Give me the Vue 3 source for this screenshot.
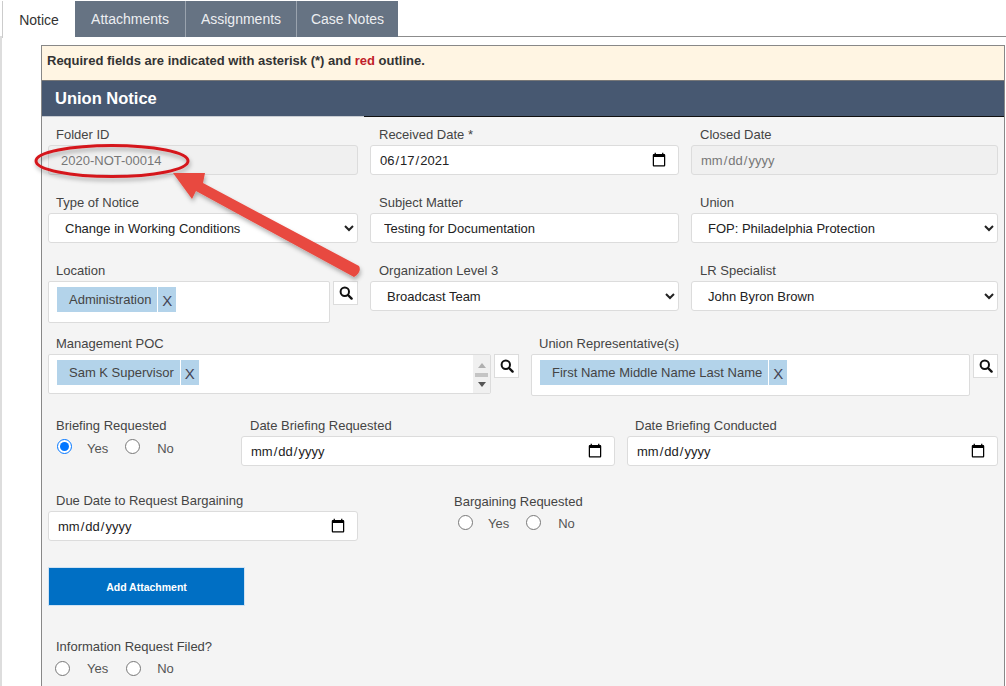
<template>
  <div class="page">
    <div class="tabs">
      <button v-for="(tab, i) in tabs" :key="tab" type="button" class="tab" :class="{ active: i === 0 }">{{ tab }}</button>
    </div>

    <div class="panel">
      <div class="notice-bar">Required fields are indicated with asterisk (*) and <span class="red">red</span> outline.</div>
      <div class="panel-title">Union Notice</div>

      <form class="form" @submit.prevent>
        <div class="row row-three row-first">
          <div class="field">
            <label>Folder ID</label>
            <input class="control readonly id-input" type="text" value="2020-NOT-00014" disabled />
          </div>
          <div class="field">
            <label>Received Date *</label>
            <input class="control" type="date" value="2021-06-17" />
          </div>
          <div class="field">
            <label>Closed Date</label>
            <input class="control readonly" type="date" disabled />
          </div>
        </div>

        <div class="row row-three row-second">
          <div class="field">
            <label>Type of Notice</label>
            <select class="control pick"><option>Change in Working Conditions</option></select>
          </div>
          <div class="field">
            <label>Subject Matter</label>
            <input class="control text-input" type="text" value="Testing for Documentation" />
          </div>
          <div class="field">
            <label>Union</label>
            <select class="control pick"><option>FOP: Philadelphia Protection</option></select>
          </div>
        </div>

        <div class="row row-three row-third">
          <div class="field">
            <label>Location</label>
            <div class="lookup">
              <div class="tag-box loc-box">
                <span class="tag">Administration</span><span class="tag-x">X</span>
              </div>
              <button type="button" class="search-btn">
                <svg width="14" height="14" viewBox="0 0 14 14"><circle cx="5.8" cy="5.8" r="4.2" fill="none" stroke="#111" stroke-width="2" /><path d="M9 9l3.6 3.6" stroke="#111" stroke-width="2.4" stroke-linecap="round" /></svg>
              </button>
            </div>
          </div>
          <div class="field">
            <label>Organization Level 3</label>
            <select class="control pick"><option>Broadcast Team</option></select>
          </div>
          <div class="field">
            <label>LR Specialist</label>
            <select class="control pick"><option>John Byron Brown</option></select>
          </div>
        </div>

        <div class="row row-two row-fourth">
          <div class="field">
            <label>Management POC</label>
            <div class="lookup">
              <div class="tag-box poc-box">
                <span class="tag">Sam K Supervisor</span><span class="tag-x">X</span>
                <div class="fake-scroll">
                  <i class="up"></i>
                  <b></b>
                  <i class="down"></i>
                </div>
              </div>
              <button type="button" class="search-btn">
                <svg width="14" height="14" viewBox="0 0 14 14"><circle cx="5.8" cy="5.8" r="4.2" fill="none" stroke="#111" stroke-width="2" /><path d="M9 9l3.6 3.6" stroke="#111" stroke-width="2.4" stroke-linecap="round" /></svg>
              </button>
            </div>
          </div>
          <div class="field">
            <label>Union Representative(s)</label>
            <div class="lookup">
              <div class="tag-box rep-box">
                <span class="tag">First Name Middle Name Last Name</span><span class="tag-x">X</span>
              </div>
              <button type="button" class="search-btn">
                <svg width="14" height="14" viewBox="0 0 14 14"><circle cx="5.8" cy="5.8" r="4.2" fill="none" stroke="#111" stroke-width="2" /><path d="M9 9l3.6 3.6" stroke="#111" stroke-width="2.4" stroke-linecap="round" /></svg>
              </button>
            </div>
          </div>
        </div>

        <div class="row row-brief">
          <div class="field">
            <label>Briefing Requested</label>
            <div class="radios">
              <input type="radio" name="brief" checked /><span>Yes</span>
              <input type="radio" name="brief" /><span>No</span>
            </div>
          </div>
          <div class="field">
            <label>Date Briefing Requested</label>
            <input class="control" type="date" />
          </div>
          <div class="field">
            <label>Date Briefing Conducted</label>
            <input class="control" type="date" />
          </div>
        </div>

        <div class="row row-due">
          <div class="field">
            <label>Due Date to Request Bargaining</label>
            <input class="control" type="date" />
          </div>
          <div class="field bargain">
            <label>Bargaining Requested</label>
            <div class="radios">
              <input type="radio" name="bargain" /><span>Yes</span>
              <input type="radio" name="bargain" /><span>No</span>
            </div>
          </div>
        </div>

        <button type="button" class="attach-btn">Add Attachment</button>

        <div class="field info">
          <label>Information Request Filed?</label>
          <div class="radios">
            <input type="radio" name="info" /><span>Yes</span>
            <input type="radio" name="info" /><span>No</span>
          </div>
        </div>
      </form>
    </div>

    <!-- callout drawn on top of the screenshot -->
    <svg class="callout" width="1006" height="686" viewBox="0 0 1006 686">
      <defs>
        <filter id="soft" x="-20%" y="-40%" width="140%" height="180%">
          <feDropShadow dx="1" dy="3" stdDeviation="2" flood-color="#000" flood-opacity="0.3" />
        </filter>
      </defs>
      <ellipse cx="112" cy="161" rx="76" ry="15.5" fill="none" stroke="#d5191d" stroke-width="3" filter="url(#soft)" />
      <path
        d="M173 173 L205 173 L203 183 L359 266 Q362 272 354 277 L196 191 L192 199 Z"
        fill="#e8483f"
        filter="url(#soft)"
      />
    </svg>
  </div>
</template>

<script setup>
const tabs = ['Notice', 'Attachments', 'Assignments', 'Case Notes']
</script>

<style>
html,
body {
  margin: 0;
  background: #fff;
  overflow: hidden;
}
</style>

<style scoped>
.page {
  position: relative;
  width: 1006px;
  height: 686px;
  overflow: hidden;
  background: #fff;
  font-family: "Liberation Sans", Arial, sans-serif;
  font-size: 13px;
  color: #444;
}

.tabs {
  display: flex;
  height: 35px;
  padding: 1px 0 0 2px;
  border-bottom: 1px solid #8c8c8c;
}

.tab {
  width: 111px;
  height: 36px;
  border: none;
  border-right: 1px solid #9aa3ae;
  padding: 0;
  background: #667383;
  color: #eceef1;
  font: 14px "Liberation Sans", Arial, sans-serif;
}

.tab:last-child {
  width: 101px;
  border-right: none;
}

.tab.active {
  width: 73px;
  height: 37px;
  background: #fff;
  color: #333;
  border-left: 1px solid #ccc;
  border-right: none;
}

.panel {
  margin: 8px 1px 0 41px;
  border: 1px solid #888;
  border-bottom: none;
  height: 642px;
  background: #f4f4f4;
}

.notice-bar {
  height: 34px;
  line-height: 30px;
  padding-left: 5px;
  background: #fff5e3;
  border-bottom: 1px solid #777;
  color: #333;
  font-weight: 700;
  font-size: 13px;
}

.red {
  color: #c0202a;
}

.panel-title {
  height: 35px;
  line-height: 34px;
  padding-left: 13px;
  background: #475871;
  border-bottom: 1px solid #222;
  border-image: linear-gradient(to right, #c8ccd2 322px, #111 322px) 1;
  color: #fff;
  font-size: 16.5px;
  font-weight: 700;
}

.form {
  padding: 7px 6px 0;
}

.row {
  display: grid;
  column-gap: 12px;
  width: 950px;
}

.row-three {
  grid-template-columns: 310px 309px 307px;
}

.row-three .field + .field label {
  padding-left: 9px;
}

.row-first,
.row-second {
  margin-bottom: 17px;
}

.row-third {
  height: 63px;
  margin-bottom: 10px;
}

.row-two {
  grid-template-columns: 471px 467px;
  height: 63px;
  margin-bottom: 19px;
}

.row-brief {
  grid-template-columns: 181px 374px 371px;
  margin-bottom: 24px;
}

.row-brief .field:nth-child(2) label {
  padding-left: 9px;
}

.row-due {
  grid-template-columns: 310px 300px;
  column-gap: 96px;
}

.field label {
  display: block;
  height: 21px;
  line-height: 22px;
  padding-left: 8px;
  white-space: nowrap;
}

.control {
  display: block;
  width: 100%;
  height: 30px;
  box-sizing: border-box;
  border: 1px solid #dcdcdc;
  border-radius: 3px;
  background-color: #fff;
  color: #222;
  font: inherit;
  padding: 0 8px;
}

.control::-webkit-calendar-picker-indicator {
  width: 16px;
  height: 16px;
  padding: 0;
  margin: 0 3px 0 0;
}

.readonly {
  background: #f0f0f0;
  color: #777;
}

.id-input {
  padding-left: 12px;
}

.text-input {
  padding-left: 13px;
}

.pick {
  padding-left: 12px;
}

.lookup {
  display: flex;
  align-items: flex-start;
  gap: 3px;
}

.tag-box {
  position: relative;
  box-sizing: border-box;
  display: flex;
  align-items: flex-start;
  padding: 5px 8px;
  border: 1px solid #dcdcdc;
  border-radius: 2px;
  background: #fff;
}

.loc-box {
  width: 282px;
  height: 42px;
}

.poc-box {
  width: 443px;
  height: 40px;
}

.rep-box {
  width: 439px;
  height: 42px;
}

.tag {
  height: 25px;
  line-height: 26px;
  padding: 0 6px 0 12px;
  background: #b3d3ea;
  color: #444;
  white-space: nowrap;
}

.tag-x {
  height: 25px;
  width: 18px;
  margin-left: 1px;
  line-height: 28px;
  text-align: center;
  background: #b3d3ea;
  color: #445;
  font-size: 15px;
}

.search-btn {
  display: flex;
  align-items: center;
  justify-content: center;
  flex: none;
  width: 25px;
  height: 24px;
  padding: 0;
  border: 1px solid #dcdcdc;
  background: #fff;
}

.fake-scroll {
  position: absolute;
  top: 0;
  right: 0;
  bottom: 0;
  width: 17px;
  display: flex;
  flex-direction: column;
  align-items: center;
  justify-content: space-between;
  padding: 8px 0 6px;
  box-sizing: border-box;
  background: #f0f0f0;
}

.fake-scroll b {
  width: 13px;
  height: 4px;
  background: #c4c4c4;
}

.fake-scroll i {
  width: 0;
  height: 0;
  border-left: 4px solid transparent;
  border-right: 4px solid transparent;
}

.fake-scroll .up {
  border-bottom: 5px solid #b0b0b0;
}

.fake-scroll .down {
  border-top: 5px solid #555;
}

.radios {
  display: flex;
  align-items: center;
  height: 22px;
  padding-left: 9px;
  color: #555;
}

.radios input {
  width: 15px;
  height: 15px;
  margin: -2px 0 0;
  flex: none;
}

.radios span {
  margin: 2px 17px 0 15px;
}

.radios span:last-child {
  margin-left: 17px;
}

.bargain label {
  padding-left: 0;
  line-height: 24px;
}

.bargain .radios {
  padding-left: 4px;
}

.bargain .radios input {
  margin-top: 0;
}

.bargain .radios span {
  margin-top: 3px;
}

.attach-btn {
  display: block;
  width: 197px;
  height: 39px;
  margin: 26px 0 30px;
  border: 1px solid #cfe2f3;
  background: #006fc4;
  color: #fff;
  font: 700 10.5px "Liberation Sans", Arial, sans-serif;
}

.info .radios {
  padding-left: 7px;
}

.info .radios input {
  margin-top: 0;
}

.info .radios span {
  margin: 0 18px 0 17px;
}

.info .radios span:last-child {
  margin-left: 16px;
}

.callout {
  position: absolute;
  top: 0;
  left: 0;
  pointer-events: none;
}

.page::before {
  content: "";
  position: absolute;
  left: 0;
  top: 36px;
  bottom: 0;
  width: 2px;
  background: #ddd;
}
</style>
